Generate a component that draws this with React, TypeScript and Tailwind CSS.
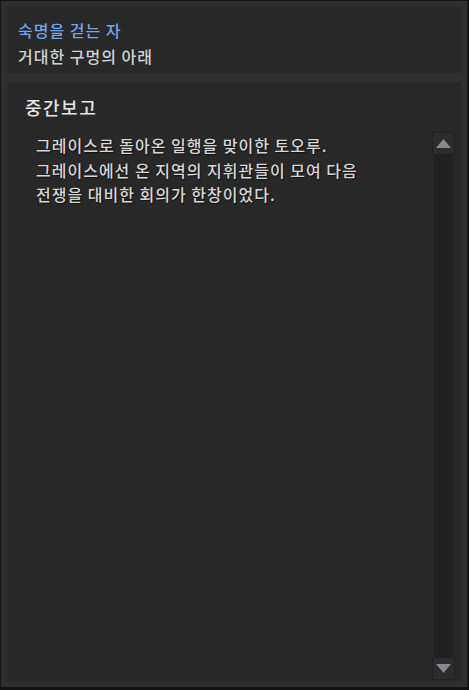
import React from 'react';

const font = { fontFamily: '"Noto Sans CJK KR", "Noto Sans", sans-serif' };

const ScrollButton = ({ dir }: { dir: 'up' | 'down' }) => (
  <div className="w-[23px] h-[23px] bg-[#2c2c2c] border border-[#1f1f1f] flex items-center justify-center">
    <svg width="15" height="9" viewBox="0 0 15 9">
      {dir === 'up' ? (
        <polygon points="7.5,0 15,9 0,9" fill="#8a8790" />
      ) : (
        <polygon points="0,0 15,0 7.5,9" fill="#8a8790" />
      )}
    </svg>
  </div>
);

const App = () => {
  return (
    <div className="w-[469px] h-[690px] bg-[#141414] pt-px pl-px" style={font}>
      <div className="w-[466px] h-[686px] bg-[#2f2f2f] p-[6px] flex flex-col gap-[9px]">
        {/* quest header */}
        <div className="h-[66px] bg-[#282828] pt-[10px] pl-[11px] leading-[26px] text-[16px] tracking-[1px] font-medium">
          <div className="text-[#72a5ea]">숙명을 걷는 자</div>
          <div className="text-[#d2d2d2]">거대한 구멍의 아래</div>
        </div>

        {/* body */}
        <div className="flex-1 bg-[#282828] flex flex-col">
          <div className="pt-[13px] pl-[18px] text-[18px] leading-[24px] tracking-[1.5px] font-medium text-[#e4e4e4]">중간보고</div>
          <div className="flex-1 flex flex-row mt-[13px] mb-px">
            <div className="flex-1 pl-[29px] pt-px text-[16px] leading-[24.5px] tracking-[1px] font-medium text-[#d6d6d6] [text-shadow:1px_1px_1px_#111]">
              <p>그레이스로 돌아온 일행을 맞이한 토오루.</p>
              <p>그레이스에선 온 지역의 지휘관들이 모여 다음</p>
              <p>전쟁을 대비한 회의가 한창이었다.</p>
            </div>
            <div className="w-[23px] mr-[6px] flex flex-col">
              <ScrollButton dir="up" />
              <div className="flex-1 mx-[2px] bg-[#212121]" />
              <ScrollButton dir="down" />
            </div>
          </div>
        </div>
      </div>
    </div>
  );
};

export default App;
